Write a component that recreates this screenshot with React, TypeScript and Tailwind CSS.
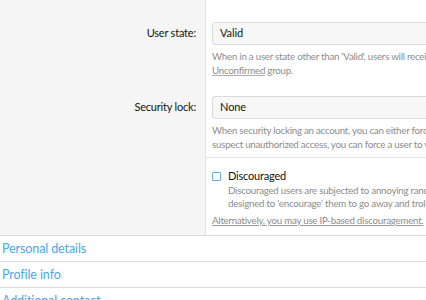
import React from "react";

export default function App() {
  return (
    <div className="w-[426px] h-[300px] overflow-hidden bg-white font-['Lato',sans-serif] text-[#141414]">
      <div className="w-[760px]">
        {/* Row 1 */}
        <div className="flex">
          <div className="w-[206px] shrink-0 bg-[#f5f5f5] border-r border-[#e3e3e3] pt-[22px] pr-[9px]">
            <div className="h-[23px] flex items-center justify-end text-[11px] tracking-[-0.2px]">User state:</div>
          </div>
          <div className="flex-1 pt-[22px] pl-[6px]">
            <div className="h-[23px] w-[520px] rounded-[3px] border border-[#dadada] bg-[#f7f7f7] flex items-center pl-[7px] text-[11px] tracking-[-0.1px]">
              Valid
            </div>
            <div className="mt-[4px] text-[9.75px] tracking-[-0.25px] leading-[14px] text-[#8c8c8c] whitespace-nowrap">
              <div>When in a user state other than 'Valid', users will receive permissions from the</div>
              <div>
                <span className="underline decoration-[#b0b0b0]">Unconfirmed</span> group.
              </div>
            </div>
          </div>
        </div>
        {/* Row 2 */}
        <div className="flex">
          <div className="w-[206px] shrink-0 bg-[#f5f5f5] border-r border-[#e3e3e3] pt-[19px] pr-[9px]">
            <div className="h-[23px] flex items-center justify-end text-[11px] tracking-[-0.2px]">Security lock:</div>
          </div>
          <div className="flex-1 pt-[19px] pl-[6px] pb-[6px]">
            <div className="h-[23px] w-[520px] rounded-[3px] border border-[#dadada] bg-[#f7f7f7] flex items-center pl-[7px] text-[11px] tracking-[-0.1px]">
              None
            </div>
            <div className="mt-[4px] text-[9.75px] tracking-[-0.25px] leading-[14px] text-[#8c8c8c] whitespace-nowrap">
              <div>When security locking an account, you can either force a user to change their password on next login. If you</div>
              <div>suspect unauthorized access, you can force a user to verify their email address before continuing.</div>
            </div>
          </div>
        </div>
        {/* Row 3 */}
        <div className="flex">
          <div className="w-[206px] shrink-0 bg-[#f5f5f5] border-r border-[#e3e3e3]" />
          <div className="flex-1">
            <div className="border-t border-[#e3e3e3] pt-[10px] pl-[6px] pb-[8px]">
              <div className="flex items-center h-[16px]">
                <div className="w-[9px] h-[9px] border border-[#5fb0ec] rounded-[1px] bg-white" />
                <span className="ml-[7px] text-[11px] tracking-[-0.2px]">Discouraged</span>
              </div>
              <div className="pl-[16px] text-[9.75px] tracking-[-0.25px] leading-[13px] text-[#8c8c8c] whitespace-nowrap">
                <div>Discouraged users are subjected to annoying random behavior while browsing the site. This is</div>
                <div>designed to 'encourage' them to go away and troll some other site.</div>
              </div>
              <div className="mt-[3px] text-[9.75px] tracking-[-0.25px] leading-[14px] text-[#8c8c8c] whitespace-nowrap">
                <span className="underline decoration-[#9a9a9a]">Alternatively, you may use IP-based discouragement.</span>
              </div>
            </div>
          </div>
        </div>
        {/* Links */}
        <div className="border-t border-[#dcdcdc]">
          <div className="h-[26px] border-b border-[#dcdcdc] flex items-center pt-[2px] pl-[2px] text-[12.5px] tracking-[-0.1px] text-[#47a7eb]">Personal details</div>
          <div className="h-[26px] border-b border-[#dcdcdc] flex items-center pt-[2px] pl-[2px] text-[12.5px] tracking-[-0.1px] text-[#47a7eb]">Profile info</div>
          <div className="h-[26px] border-b border-[#dcdcdc] flex items-center pt-[2px] pl-[2px] text-[12.5px] tracking-[-0.1px] text-[#47a7eb]">Additional contact</div>
        </div>
      </div>
    </div>
  );
}
